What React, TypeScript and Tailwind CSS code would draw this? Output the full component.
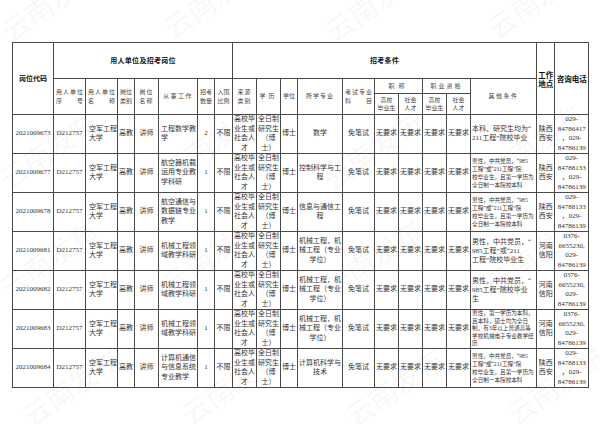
import React from 'react';

type Row = {
  code: string;
  work: string[];
  num: string;
  major: string[];
  other: string[];
  small: boolean;
  loc: string[];
  phone: string[];
};

const otherA = ['男性，中共党员，“985', '工程”或“211工程”院', '校毕业生，且第一学历为', '全日制一本院校本科'];
const xa = ['陕西', '西安'];
const hn = ['河南', '信阳'];
const phA = ['029-', '84788133', '，029-', '84786139'];
const phB = ['0376-', '6655230,', '029-', '84786139'];
const mech = ['机械工程，机', '械工程（专业', '学位）'];
const mechWork = ['机械工程领', '域教学科研'];

const rows: Row[] = [
  { code: '2021009673', work: ['工程数学教', '学'], num: '2', major: ['数学'], other: ['本科、研究生均为“', '211工程”院校毕业'], small: false, loc: xa, phone: ['029-', '84786417', '，029-', '84786139'] },
  { code: '2021009677', work: ['航空器机载', '运用专业教', '学科研'], num: '1', major: ['控制科学与工', '程'], other: otherA, small: true, loc: xa, phone: phA },
  { code: '2021009678', work: ['航空通信与', '数据链专业', '教学'], num: '1', major: ['信息与通信工', '程'], other: otherA, small: true, loc: xa, phone: phA },
  { code: '2021009681', work: mechWork, num: '1', major: mech, other: ['男性，中共党员，“', '985工程”或“211', '工程”院校毕业生'], small: false, loc: hn, phone: phB },
  { code: '2021009682', work: mechWork, num: '1', major: mech, other: ['男性，中共党员，“', '985工程”院校毕业', '生'], small: false, loc: hn, phone: phB },
  { code: '2021009683', work: mechWork, num: '1', major: mech, other: ['男性，第一学历为本科，', '且本科，硕士均为全日', '制，有3年以上普通高等', '学校机械电子专业教学经', '历'], small: true, loc: hn, phone: phB },
  { code: '2021009684', work: ['计算机通信', '与信息系统', '专业教学'], num: '1', major: ['计算机科学与', '技术'], other: otherA, small: true, loc: xa, phone: phA },
];

const cols = [41, 32, 32, 17, 24, 39, 17, 18, 24, 24, 17, 45, 32, 24, 24, 24, 24, 66, 18, 34];

const Lines = ({ lines }: { lines: string[] }) => (
  <>
    {lines.map((l, i) => (
      <div key={i} className="whitespace-nowrap">{l}</div>
    ))}
  </>
);

const td = "border border-[#4a4a4a] p-0 align-middle text-center font-['Liberation_Serif','Noto_Sans_CJK_SC',serif]";
const hd = 'border border-[#4a4a4a] p-0 align-middle text-center text-[6px] leading-[8.5px] text-[#444]';

const marks = [
  'left-[12px] top-[17px]',
  'left-[174px] top-[14px]',
  'left-[336px] top-[17px]',
  'left-[498px] top-[14px]',
  'left-[10px] top-[165px]',
  'left-[172px] top-[158px]',
  'left-[334px] top-[165px]',
  'left-[496px] top-[158px]',
  'left-[10px] top-[274px]',
  'left-[172px] top-[270px]',
  'left-[334px] top-[274px]',
  'left-[496px] top-[270px]',
  'left-[33px] top-[402px]',
  'left-[192px] top-[400px]',
  'left-[356px] top-[402px]',
  'left-[517px] top-[400px]',
];

export default function App() {
  return (
    <div className="relative w-[600px] h-[424px] overflow-hidden bg-white font-['Liberation_Serif','Noto_Sans_CJK_SC',serif] text-[#333]">
      <div className="pt-[42px] pl-[12px]">
        <table className="table-fixed border-collapse w-[576px] border border-[#4a4a4a]">
          <colgroup>
            {cols.map((w, i) => (
              <col key={i} style={{ width: w }} />
            ))}
          </colgroup>
          <thead>
            <tr className="h-[36px]">
              <th rowSpan={3} className={`${td} font-['Noto_Sans_CJK_SC',sans-serif] font-bold text-[7px] text-[#111]`}>岗位代码</th>
              <th colSpan={7} className={`${td} font-['Noto_Sans_CJK_SC',sans-serif] font-bold text-[7px] tracking-[0.3px] text-[#111]`}>用人单位及招考岗位</th>
              <th colSpan={10} className={`${td} font-['Noto_Sans_CJK_SC',sans-serif] font-bold text-[7px] tracking-[0.3px] text-[#111]`}>招考条件</th>
              <th rowSpan={3} className={`${td} font-['Noto_Sans_CJK_SC',sans-serif] font-bold text-[7.5px] leading-[9px] text-[#111]`}><Lines lines={['工作', '地点']} /></th>
              <th rowSpan={3} className={`${td} font-['Noto_Sans_CJK_SC',sans-serif] font-bold text-[7.5px] text-[#111]`}>咨询电话</th>
            </tr>
            <tr className="h-[15px]">
              <th rowSpan={2} className={`${hd} font-normal`}>
                <div className="px-[2px] text-justify [text-align-last:justify]"><div>用人单位</div><div>序　号</div></div>
              </th>
              <th rowSpan={2} className={`${hd} font-normal`}>
                <div className="px-[2px] text-justify [text-align-last:justify]"><div>用人单位</div><div>名　称</div></div>
              </th>
              <th rowSpan={2} className={`${hd} font-normal`}><Lines lines={['岗位', '类别']} /></th>
              <th rowSpan={2} className={`${hd} font-normal tracking-[1px]`}><Lines lines={['岗位', '名称']} /></th>
              <th rowSpan={2} className={`${hd} font-normal tracking-[1.5px]`}>从事工作</th>
              <th rowSpan={2} className={`${hd} font-normal`}><Lines lines={['招考', '数量']} /></th>
              <th rowSpan={2} className={`${hd} font-normal`}><Lines lines={['入围', '比例']} /></th>
              <th rowSpan={2} className={`${hd} font-normal tracking-[1px]`}><Lines lines={['来源', '类别']} /></th>
              <th rowSpan={2} className={`${hd} font-normal tracking-[3px]`}>学历</th>
              <th rowSpan={2} className={`${hd} font-normal`}>学位</th>
              <th rowSpan={2} className={`${hd} font-normal tracking-[1px]`}>所学专业</th>
              <th rowSpan={2} className={`${hd} font-normal`}>
                <div className="px-[2px] text-justify [text-align-last:justify]"><div>考试专业</div><div>科　目</div></div>
              </th>
              <th colSpan={2} className={`${hd} font-normal tracking-[4px]`}>职称</th>
              <th colSpan={2} className={`${hd} font-normal tracking-[2px]`}>职业资格</th>
              <th rowSpan={2} className={`${hd} font-normal tracking-[1.5px]`}>其他条件</th>
            </tr>
            <tr className="h-[21px]">
              <th className={`${hd} font-normal`}><Lines lines={['高校', '毕业生']} /></th>
              <th className={`${hd} font-normal`}><Lines lines={['社会', '人才']} /></th>
              <th className={`${hd} font-normal`}><Lines lines={['高校', '毕业生']} /></th>
              <th className={`${hd} font-normal`}><Lines lines={['社会', '人才']} /></th>
            </tr>
          </thead>
          <tbody className="text-[7px] leading-[9.5px]">
            {rows.map((r) => (
              <tr key={r.code} className="h-[39px]">
                <td className={td}>{r.code}</td>
                <td className={td}>D212757</td>
                <td className={`${td} text-left`}><div className="pl-[3px]"><Lines lines={['空军工程', '大学']} /></div></td>
                <td className={td}>高教</td>
                <td className={td}>讲师</td>
                <td className={`${td} text-left`}><div className="pl-[2px]"><Lines lines={r.work} /></div></td>
                <td className={td}>{r.num}</td>
                <td className={td}>不限</td>
                <td className={td}><Lines lines={['高校毕', '业生或', '社会人', '才']} /></td>
                <td className={td}><Lines lines={['全日制', '研究生', '（博', '士）']} /></td>
                <td className={td}>博士</td>
                <td className={td}><Lines lines={r.major} /></td>
                <td className={td}>免笔试</td>
                <td className={td}>无要求</td>
                <td className={td}>无要求</td>
                <td className={td}>无要求</td>
                <td className={td}>无要求</td>
                <td className={`${td} text-left`}>
                  {r.small ? (
                    <div className={`pl-[1px] text-[5.6px] ${r.other.length > 4 ? 'leading-[7.4px]' : 'leading-[8.2px]'}`}><Lines lines={r.other} /></div>
                  ) : (
                    <div className="pl-[1px] leading-[9px]"><Lines lines={r.other} /></div>
                  )}
                </td>
                <td className={`${td} leading-[9px]`}><Lines lines={r.loc} /></td>
                <td className={td}><Lines lines={r.phone} /></td>
              </tr>
            ))}
          </tbody>
        </table>
      </div>
      {marks.map((m, i) => (
        <span
          key={i}
          className={`pointer-events-none absolute ${m} whitespace-nowrap font-['Noto_Sans_CJK_SC',sans-serif] text-[28px] leading-[28px] text-black/[0.045] rotate-[-35deg] origin-bottom-left`}
        >
          云南发布
        </span>
      ))}
    </div>
  );
}
